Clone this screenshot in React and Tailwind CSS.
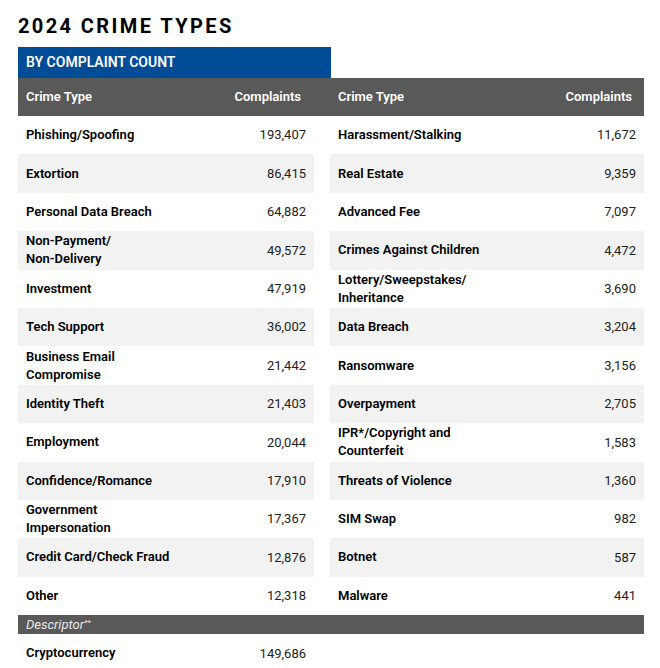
const left = [
  ["Phishing/Spoofing", "193,407"],
  ["Extortion", "86,415"],
  ["Personal Data Breach", "64,882"],
  ["Non-Payment/\nNon-Delivery", "49,572"],
  ["Investment", "47,919"],
  ["Tech Support", "36,002"],
  ["Business Email\nCompromise", "21,442"],
  ["Identity Theft", "21,403"],
  ["Employment", "20,044"],
  ["Confidence/Romance", "17,910"],
  ["Government\nImpersonation", "17,367"],
  ["Credit Card/Check Fraud", "12,876"],
  ["Other", "12,318"],
];
const right = [
  ["Harassment/Stalking", "11,672"],
  ["Real Estate", "9,359"],
  ["Advanced Fee", "7,097"],
  ["Crimes Against Children", "4,472"],
  ["Lottery/Sweepstakes/\nInheritance", "3,690"],
  ["Data Breach", "3,204"],
  ["Ransomware", "3,156"],
  ["Overpayment", "2,705"],
  ["IPR*/Copyright and\nCounterfeit", "1,583"],
  ["Threats of Violence", "1,360"],
  ["SIM Swap", "982"],
  ["Botnet", "587"],
  ["Malware", "441"],
];

function Cell({ name, value, odd }) {
  return (
    <div className={`h-[38.4px] flex items-center justify-between px-2 ${odd ? "bg-[#f2f2f2]" : "bg-white"}`}>
      <span className="font-semibold whitespace-pre-line leading-[18px] text-black">{name}</span>
      <span className="text-[#222]">{value}</span>
    </div>
  );
}

export default function App() {
  return (
    <div className="bg-white w-[660px] h-[668px] overflow-hidden pl-[18px] pr-[16px] text-[13px]" style={{ fontFamily: "Roboto, 'Liberation Sans', sans-serif" }}>
      <h1 className="pt-[13px] h-[47px] text-[20px] font-bold tracking-[0.12em] text-black leading-[26px]">2024 CRIME TYPES</h1>
      <div className="w-[313px] h-[31px] bg-[#004c97] text-white font-semibold text-[14px] flex items-center px-2">BY COMPLAINT COUNT</div>
      <div className="h-[38px] bg-[#595959] text-white font-semibold grid grid-cols-[296px_314px] gap-x-4">
        <div className="flex items-center justify-between px-2 pr-[13px]"><span>Crime Type</span><span>Complaints</span></div>
        <div className="flex items-center justify-between px-2 pr-[12px]"><span>Crime Type</span><span>Complaints</span></div>
      </div>
      <div className="grid grid-cols-[296px_314px] gap-x-4">
        {left.map((l, i) => [
          <Cell key={"l" + i} name={l[0]} value={l[1]} odd={i % 2 === 1} />,
          <Cell key={"r" + i} name={right[i][0]} value={right[i][1]} odd={i % 2 === 1} />,
        ])}
      </div>
      <div className="h-[19px] bg-[#595959] text-[#e8e8e8] italic flex items-center px-2">Descriptor<span className="text-[8px] -mt-1">**</span></div>
      <div className="grid grid-cols-[296px_314px] gap-x-4">
        <Cell name="Cryptocurrency" value="149,686" />
      </div>
    </div>
  );
}
